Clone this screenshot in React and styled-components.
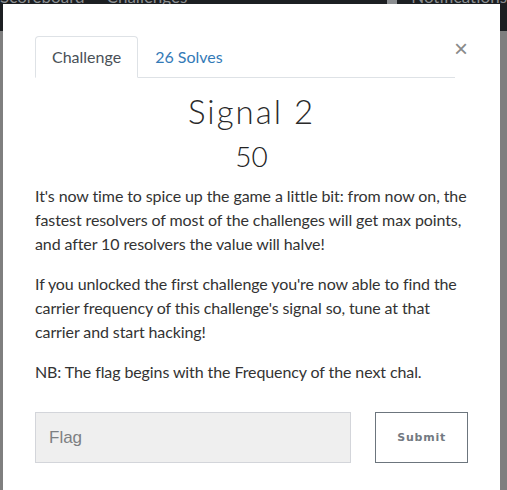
import styled, { createGlobalStyle } from "styled-components";

const GlobalStyle = createGlobalStyle`
  html, body {
    margin: 0;
    padding: 0;
    background: #7f7f7f;
    font-family: "Lato", "Liberation Sans", sans-serif;
    overflow: hidden;
  }
  * { box-sizing: border-box; }
`;

const App = () => {
  return (
    <Page>
      <GlobalStyle />
      <Navbar>
        <NavLink>Scoreboard</NavLink>
        <NavLink>Challenges</NavLink>
        <NavSpacer />
        <NavIcon />
        <NavLink>Notifications</NavLink>
      </Navbar>

      <Modal>
        <Close aria-label="Close">×</Close>
        <Tabs>
          <Tab active>Challenge</Tab>
          <Tab>26 Solves</Tab>
        </Tabs>

        <Title>Signal 2</Title>
        <Value>50</Value>

        <Description>
          <p>
            It's now time to spice up the game a little bit: from now on, the
            fastest resolvers of most of the challenges will get max points,
            and after 10 resolvers the value will halve!
          </p>
          <p>
            If you unlocked the first challenge you're now able to find the
            carrier frequency of this challenge's signal so, tune at that
            carrier and start hacking!
          </p>
          <p>NB: The flag begins with the Frequency of the next chal.</p>
        </Description>

        <SubmitRow>
          <FlagInput type="text" placeholder="Flag" />
          <SubmitButton>Submit</SubmitButton>
        </SubmitRow>
      </Modal>
    </Page>
  );
};

export default App;

const Page = styled.div`
  position: relative;
  width: 507px;
  height: 490px;
  overflow: hidden;
`;

const Navbar = styled.nav`
  height: 31px;
  background: #1c1f22;
  display: flex;
  align-items: flex-start;
  gap: 22px;
`;

const NavLink = styled.span`
  color: #8a8d90;
  font-size: 17px;
  line-height: 17px;
  margin-top: -12px;
`;

const NavSpacer = styled.div`
  flex: 1;
`;

const NavIcon = styled.span`
  width: 10px;
  height: 10px;
  margin-top: -6px;
  margin-right: -8px;
  background: #8a8d90;
`;

const Modal = styled.div`
  position: absolute;
  top: 4px;
  left: 3px;
  width: 497px;
  height: 520px;
  background: #ffffff;
  padding: 32px;
  color: #2b2b2b;
`;

const Close = styled.button`
  position: absolute;
  top: 33px;
  right: 32px;
  border: none;
  background: none;
  padding: 0;
  font-family: "Liberation Sans", sans-serif;
  font-size: 24px;
  line-height: 24px;
  font-weight: 400;
  color: #8a8a8a;
  cursor: pointer;
`;

const Tabs = styled.div`
  display: flex;
  margin-right: 13px;
  border-bottom: 1px solid #dee2e6;
`;

const Tab = styled.div`
  padding: 8px 16px;
  font-size: 16px;
  line-height: 24px;
  margin-bottom: -1px;
  border: 1px solid ${(p) => (p.active ? "#dee2e6" : "transparent")};
  border-bottom-color: ${(p) => (p.active ? "#fff" : "transparent")};
  border-radius: 4px 4px 0 0;
  background: ${(p) => (p.active ? "#fff" : "transparent")};
  color: ${(p) => (p.active ? "#495057" : "#337ab7")};
`;

const Title = styled.h2`
  margin: 11px 0 0;
  text-align: center;
  font-weight: 300;
  font-size: 33px;
  line-height: 44px;
  letter-spacing: 2px;
  color: #2a2a2a;
`;

const Value = styled.h3`
  margin: 5px 0 0;
  text-align: center;
  font-weight: 300;
  font-size: 28px;
  line-height: 36px;
  color: #222;
`;

const Description = styled.div`
  margin-top: 10px;
  font-size: 16px;
  line-height: 24px;
  letter-spacing: -0.1px;
  color: #333;

  p {
    margin: 0 0 16px;
  }
`;

const SubmitRow = styled.div`
  display: flex;
  gap: 24px;
  margin-top: 28px;
`;

const FlagInput = styled.input`
  width: 318px;
  height: 51px;
  background: #efefef;
  border: 1px solid #d3d5da;
  padding: 0 13px;
  font-family: "Liberation Sans", sans-serif;
  font-size: 17px;
  outline: none;

  &::placeholder {
    color: #7d7f82;
  }
`;

const SubmitButton = styled.button`
  width: 93px;
  height: 51px;
  background: #fff;
  border: 1px solid #6c757d;
  color: #737a82;
  font-family: "DejaVu Sans", sans-serif;
  font-weight: 700;
  font-size: 11px;
  letter-spacing: 0.8px;
  cursor: pointer;
`;
